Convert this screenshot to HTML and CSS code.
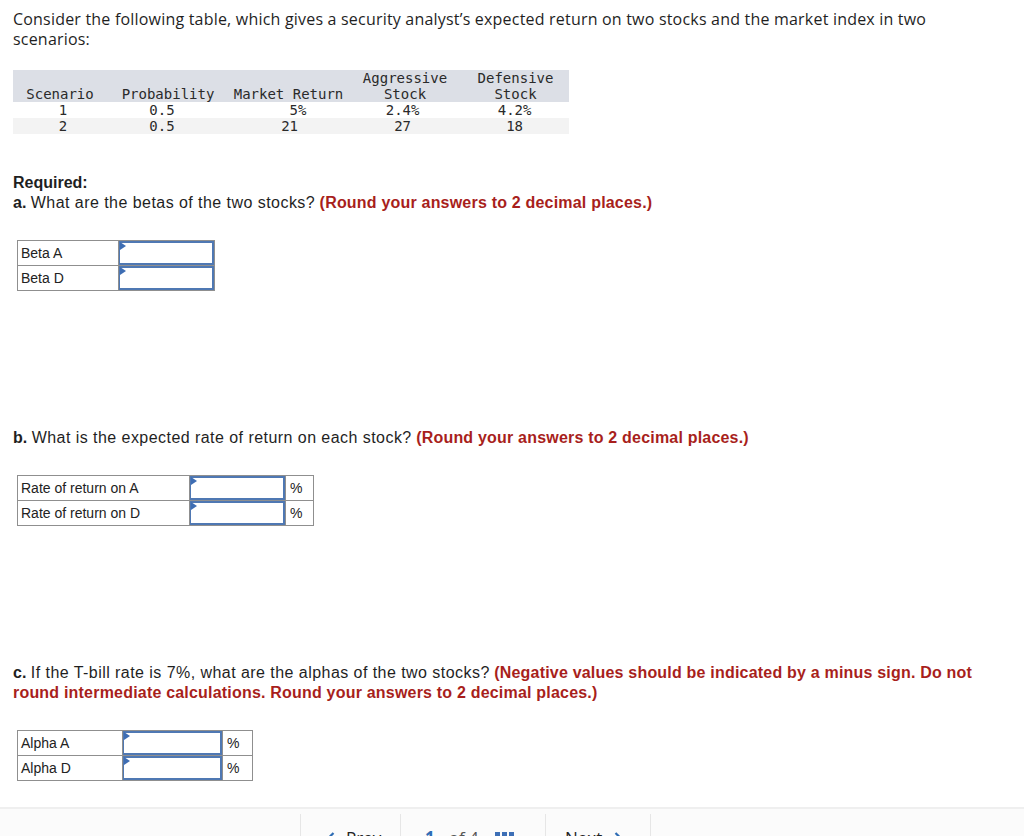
FILE: index.html
```html
<!DOCTYPE html>
<html>
<head>
<meta charset="utf-8">
<link rel="stylesheet" href="styles.css">
</head>
<body>
<main class="page">
  <p class="intro">Consider the following table, which gives a security analyst’s expected return on two stocks and the market index in two scenarios:</p>

  <table class="data">
    <colgroup>
      <col class="c1"><col class="c2"><col class="c3"><col class="c4"><col class="c5">
    </colgroup>
    <thead>
      <tr>
        <th>Scenario</th>
        <th>Probability</th>
        <th>Market Return</th>
        <th>Aggressive<br>Stock</th>
        <th>Defensive<br>Stock</th>
      </tr>
    </thead>
    <tbody>
      <tr>
        <td class="v1">1</td>
        <td class="v2">0.5</td>
        <td class="v3">5<span class="pct">%</span></td>
        <td class="v4">2.4<span class="pct">%</span></td>
        <td class="v5">4.2<span class="pct">%</span></td>
      </tr>
      <tr class="alt">
        <td class="v1">2</td>
        <td class="v2">0.5</td>
        <td class="v3">21</td>
        <td class="v4">27</td>
        <td class="v5">18</td>
      </tr>
    </tbody>
  </table>

  <p class="q q-first"><b>Required:</b><br><b>a.</b> <span class="t">What are the betas of the two stocks?</span> <b class="note">(Round your answers to 2 decimal places.)</b></p>

  <table class="answers ans-a">
    <tr><td class="lbl">Beta A</td><td class="inp"><span class="box"></span></td></tr>
    <tr><td class="lbl">Beta D</td><td class="inp"><span class="box"></span></td></tr>
  </table>

  <p class="q"><b>b.</b> <span class="t">What is the expected rate of return on each stock?</span> <b class="note">(Round your answers to 2 decimal places.)</b></p>

  <table class="answers ans-b">
    <tr><td class="lbl">Rate of return on A</td><td class="inp"><span class="box"></span></td><td class="unit">%</td></tr>
    <tr><td class="lbl">Rate of return on D</td><td class="inp"><span class="box"></span></td><td class="unit">%</td></tr>
  </table>

  <p class="q"><b>c.</b> <span class="t">If the T-bill rate is 7%, what are the alphas of the two stocks?</span> <b class="note">(Negative values should be indicated by a minus sign. Do not round intermediate calculations. Round your answers to 2 decimal places.)</b></p>

  <table class="answers ans-c">
    <tr><td class="lbl">Alpha A</td><td class="inp"><span class="box"></span></td><td class="unit">%</td></tr>
    <tr><td class="lbl">Alpha D</td><td class="inp"><span class="box"></span></td><td class="unit">%</td></tr>
  </table>
</main>

<footer class="footer">
  <div class="nav">
    <div class="btn prev">
      <svg class="chev" width="8" height="12" viewBox="0 0 8 12"><path d="M6.5 1 L1.5 6 L6.5 11" fill="none" stroke="#2f6db5" stroke-width="2.2"/></svg>
      <span>Prev</span>
    </div>
    <div class="btn mid">
      <span class="cur">1</span><span class="of">of 4</span>
      <svg class="grid" width="19" height="18" viewBox="0 0 19 18"><g fill="#3d6fb6"><rect x="0" y="0" width="5" height="5"/><rect x="7" y="0" width="5" height="5"/><rect x="14" y="0" width="5" height="5"/><rect x="0" y="7" width="5" height="5"/><rect x="7" y="7" width="5" height="5"/><rect x="14" y="7" width="5" height="5"/><rect x="0" y="14" width="5" height="4"/><rect x="7" y="14" width="5" height="4"/><rect x="14" y="14" width="5" height="4"/></g></svg>
    </div>
    <div class="btn next">
      <span>Next</span>
      <svg class="chev" width="8" height="12" viewBox="0 0 8 12"><path d="M1.5 1 L6.5 6 L1.5 11" fill="none" stroke="#2f6db5" stroke-width="2.2"/></svg>
    </div>
  </div>
</footer>
</body>
</html>
```

FILE: styles.css
```css
html, body {
  margin: 0;
  padding: 0;
  background: #ffffff;
  height: 836px;
  overflow: hidden;
}

body {
  font-family: "Liberation Sans", Arial, sans-serif;
  color: #1f1f1f;
}

.page {
  padding: 9px 13px 0 13px;
  height: 807px;
  box-sizing: border-box;
}

.intro,
.q {
  margin: 0;
  font-size: 16px;
  line-height: 20px;
  color: #1f1f1f;
}

.intro {
  font-family: "Open Sans", "Liberation Sans", sans-serif;
  letter-spacing: 0.2px;
  width: 930px;
}

.q {
  max-width: 975px;
}

.q .t {
  letter-spacing: 0.45px;
}

.q b {
  font-weight: bold;
}

.note {
  color: #a81f1c;
  letter-spacing: 0.2px;
}

/* data table */
.data {
  margin-top: 21px;
  border-collapse: collapse;
  font-family: "DejaVu Sans Mono", monospace;
  font-size: 14px;
  line-height: 16px;
  color: #2a2a2a;
  table-layout: fixed;
  width: 556px;
}

.data .c1 { width: 94px; }
.data .c2 { width: 122px; }
.data .c3 { width: 119px; }
.data .c4 { width: 114px; }
.data .c5 { width: 107px; }

.data th {
  font-weight: normal;
  background: #dcdfe6;
  vertical-align: bottom;
  text-align: center;
  padding: 0;
  white-space: nowrap;
}

.data td {
  padding: 0;
  white-space: nowrap;
}

.data tr.alt td {
  background: #f3f3f3;
}

.data .v1 { text-align: center; padding-left: 6px; }
.data .v2 { text-align: center; padding-right: 12px; }
.data .v3 { text-align: right; padding-right: 50px; }
.data .v4 { text-align: right; padding-right: 51px; }
.data .v5 { text-align: right; padding-right: 46px; }

.pct {
  display: inline-block;
  width: 0;
  overflow: visible;
}

.q-first {
  margin-top: 39px;
}

/* answer tables */
.answers {
  border-collapse: collapse;
  margin: 27px 0 137px 4px;
  font-size: 14px;
  color: #222;
}

.answers td {
  border: 1px solid #8f8f8f;
  height: 25px;
  padding: 0;
  box-sizing: border-box;
}

.answers .lbl {
  padding-left: 3px;
  line-height: 23px;
}

.answers .unit {
  padding-left: 4px;
  line-height: 23px;
}

.answers .inp {
  position: relative;
  padding: 0;
}

.box {
  display: block;
  height: 24px;
  border: 2px solid #4f78b3;
  border-left-width: 1px;
  box-sizing: border-box;
  background: #fff;
}

.inp::before {
  content: "";
  position: absolute;
  left: 1px;
  top: 1px;
  width: 0;
  height: 0;
  border-top: 4px solid transparent;
  border-bottom: 4px solid transparent;
  border-left: 6px solid #3e6db3;
}

.ans-a .lbl { width: 101px; }
.ans-a .inp { width: 96px; }

.ans-b .lbl { width: 172px; }
.ans-b .inp { width: 96px; }
.ans-b .unit { width: 28px; }

.ans-c .lbl { width: 105px; }
.ans-c .inp { width: 100px; }
.ans-c .unit { width: 30px; }

.ans-c {
  margin-bottom: 0;
}

/* footer */
.footer {
  border-top: 2px solid #efefef;
  background: #fbfbfb;
  height: 29px;
  box-sizing: border-box;
  padding-top: 5px;
}

.nav {
  display: flex;
  margin-left: 300px;
  height: 100%;
}

.btn {
  display: flex;
  align-items: flex-start;
  border-left: 1px solid #e6e6e6;
  padding-top: 14px;
  font-family: "Open Sans", "Liberation Sans", sans-serif;
  font-size: 17px;
  line-height: 20px;
  color: #222;
  box-sizing: border-box;
}

.btn.prev {
  width: 100px;
  padding-left: 26px;
  gap: 11px;
}

.btn.mid {
  width: 145px;
  padding-left: 24px;
}

.btn.next {
  width: 106px;
  padding-left: 19px;
  gap: 12px;
  border-right: 1px solid #e6e6e6;
}

.chev {
  margin-top: 4px;
  flex: none;
}

.cur {
  color: #2f6db5;
  font-weight: bold;
  margin-right: 14px;
}

.of {
  color: #555;
  margin-right: 16px;
}

.grid {
  margin-top: 4px;
  flex: none;
}
```
